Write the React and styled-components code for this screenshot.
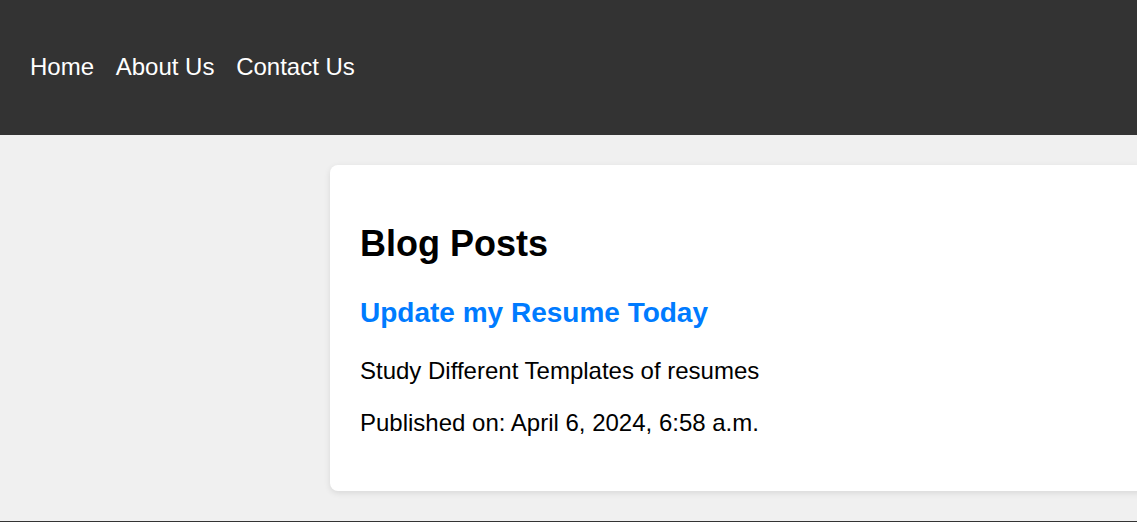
import React from "react";
import styled, { createGlobalStyle } from "styled-components";

const GlobalStyle = createGlobalStyle`
  html, body {
    margin: 0;
    padding: 0;
    background: #f0f0f0;
    font-family: "Liberation Sans", Arial, sans-serif;
    overflow-x: hidden;
  }
`;

const Header = styled.header`
  height: 135px;
  background: #333;
  display: flex;
  align-items: center;
  padding: 0 30px;
  box-sizing: border-box;
`;

const Nav = styled.nav`
  display: flex;
  gap: 21.7px;
  margin-top: -1px;
`;

const NavLink = styled.a`
  color: #fff;
  font-size: 24px;
  text-decoration: none;
`;

const Main = styled.main`
  padding: 30px 0 30px 330px;
  overflow: hidden;
`;

const Card = styled.section`
  background: #fff;
  border-radius: 8px;
  box-shadow: 0 2px 6px rgba(0, 0, 0, 0.1);
  padding: 30px;
  width: 900px;
`;

const Title = styled.h1`
  font-size: 36px;
  margin: 28px 0 32px;
  color: #000;
`;

const PostTitle = styled.h2`
  font-size: 28px;
  margin: 0 0 28px;
  a {
    color: #007bff;
    text-decoration: none;
  }
`;

const Text = styled.p`
  font-size: 24px;
  margin: 0 0 24px;
  color: #000;
`;

const Footer = styled.footer`
  background: #333;
  height: 40px;
`;

export default function App() {
  return (
    <>
      <GlobalStyle />
      <Header>
        <Nav>
          <NavLink href="#">Home</NavLink>
          <NavLink href="#">About Us</NavLink>
          <NavLink href="#">Contact Us</NavLink>
        </Nav>
      </Header>
      <Main>
        <Card>
          <Title>Blog Posts</Title>
          <PostTitle>
            <a href="#">Update my Resume Today</a>
          </PostTitle>
          <Text>Study Different Templates of resumes</Text>
          <Text>Published on: April 6, 2024, 6:58 a.m.</Text>
        </Card>
      </Main>
      <Footer />
    </>
  );
}
